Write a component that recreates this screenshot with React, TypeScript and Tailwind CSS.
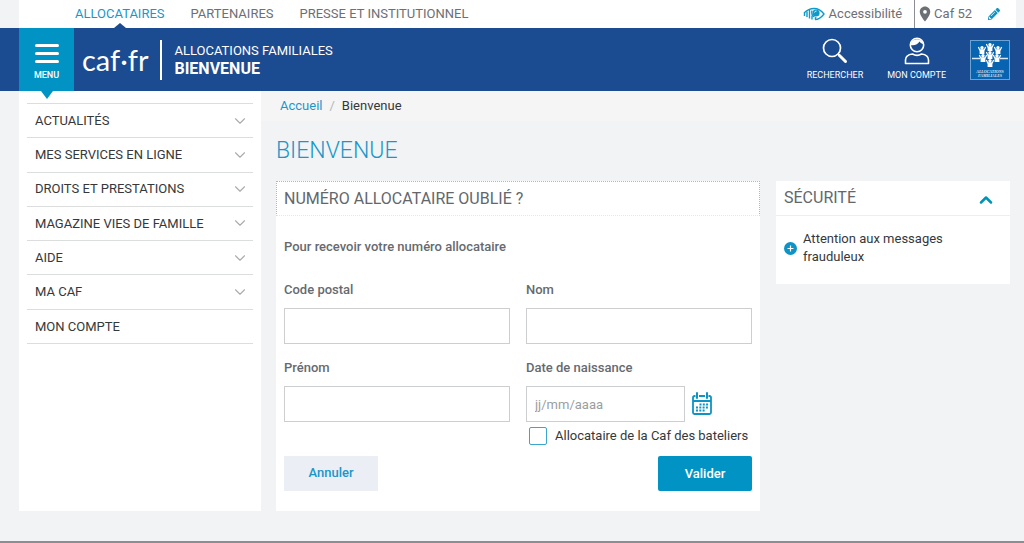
import { ChevronDown, ChevronUp } from 'lucide-react'
import { FaPencilAlt } from 'react-icons/fa'
import { MdLocationOn } from 'react-icons/md'

const menuItems = [
  { label: 'ACTUALITÉS', expandable: true },
  { label: 'MES SERVICES EN LIGNE', expandable: true },
  { label: 'DROITS ET PRESTATIONS', expandable: true },
  { label: 'MAGAZINE VIES DE FAMILLE', expandable: true },
  { label: 'AIDE', expandable: true },
  { label: 'MA CAF', expandable: true },
  { label: 'MON COMPTE', expandable: false },
]

const EyeIcon = () => (
  <svg width="22" height="14" viewBox="0 0 22 14" fill="none" stroke="#0d9aca">
    <path d="M1 6C4 3 7.500 1.500 11 1.500S18 3 21 7C18 11 15 12.500 12 12.500" strokeWidth="1.300" />
    <path d="M1.500 6v3M4 4.500v5.500M6.500 3v8.500M9 8.500v4" strokeWidth="1.400" />
    <path d="M9 3.500C8 6 9 9 11.500 10M12 12.500l1-2.500" strokeWidth="1.300" />
    <circle cx="13" cy="6" r="3.600" fill="#0d9aca" stroke="none" />
    <path d="M11.500 5.500a2 2 0 0 1 2-1.500" stroke="white" strokeWidth="0.900" />
  </svg>
)

const SearchIcon = () => (
  <svg width="26" height="26" viewBox="0 0 26 26" fill="none" stroke="white">
    <circle cx="10" cy="10" r="8.500" strokeWidth="1.700" />
    <path d="M16 16l2 2" strokeWidth="1.700" />
    <path d="M17.500 17.500l6 6" strokeWidth="3" strokeLinecap="round" />
  </svg>
)

const AccountIcon = () => (
  <svg width="26" height="28" viewBox="0 0 26 28" fill="none" stroke="white" strokeWidth="1.600">
    <circle cx="13" cy="8" r="6.700" />
    <path d="M6.500 8C10 9 14 7.500 15.500 4.500 16.500 6 18 7 19.500 7A6.700 6.700 0 0 0 6.500 8Z" fill="white" stroke="none" />
    <path d="M8.500 17c3 1.800 6 1.800 9 0 4.500.5 7 2.500 7 6v3.500h-23V23c0-3.500 2.500-5.500 7-6Z" strokeLinejoin="round" />
  </svg>
)

const people = [
  [20, 6],
  [12, 9],
  [28, 9],
  [20, 14],
  [13, 17],
  [27, 17],
  [20, 22],
]

const AfLogo = () => (
  <svg width="40" height="40" viewBox="0 0 40 40">
    <rect x="0.500" y="0.500" width="39" height="39" fill="#0864b1" stroke="#6da3d3" />
    <path d="M2 18.500h8M30 18.500h8" stroke="#d9e8f5" strokeWidth="1.300" />
    {people.map(([x, y]) => (
      <g key={`${x}-${y}`} transform={`translate(${x} ${y})`} fill="white">
        <circle cy="-1.300" r="1.700" />
        <path d="M-4.200-1.800l1.200-.5 1 2.500h4l1-2.500 1.200.5L2.400 2v3h-4.800V2Z" />
      </g>
    ))}
    <g fill="#d9e8f5" fontFamily="Liberation Serif, serif" fontSize="4" fontStyle="italic" fontWeight="700" textAnchor="middle">
      <text x="20" y="33">ALLOCATIONS</text>
      <text x="20" y="37">FAMILIALES</text>
    </g>
  </svg>
)

const CalendarIcon = () => (
  <svg width="20" height="24" viewBox="0 0 20 24" fill="none" stroke="#0d93c4">
    <path d="M3.500 4H2.500A1.500 1.500 0 0 0 1 5.500v15A1.500 1.500 0 0 0 2.500 22h15a1.500 1.500 0 0 0 1.500-1.500v-15A1.500 1.500 0 0 0 17.500 4h-1M7 4h6M1 9h18" strokeWidth="1.800" />
    <path d="M5 1v5M15 1v5" strokeWidth="2" strokeLinecap="round" />
    <path d="M7.500 12.500h9M4 15.500h12.500M4 18.500h9" strokeWidth="1.800" strokeDasharray="2 1.300" />
  </svg>
)

const TopBar = () => (
  <div className="mr-2 ml-[19px] flex h-7 items-center justify-between bg-white pl-14 text-[13px] text-[#6c7075]">
    <nav className="flex h-full items-center gap-[26px]">
      <a href="#" className="relative flex h-full items-center text-[#1a97c9]">
        ALLOCATAIRES
        <span className="absolute bottom-0 left-1/2 -ml-1.5 size-0 border-x-[6px] border-b-[5px] border-x-transparent border-b-[#1b4b91]" />
      </a>
      <a href="#">PARTENAIRES</a>
      <a href="#">PRESSE ET INSTITUTIONNEL</a>
    </nav>
    <div className="flex h-full items-center pr-4">
      <a href="#" className="flex items-center gap-1 pr-3">
        <EyeIcon />
        Accessibilité
      </a>
      <div className="flex h-full items-center border-l border-[#8b8f94] pl-px">
        <MdLocationOn className="size-[18px]" />
        <span>Caf 52</span>
        <button type="button" aria-label="Modifier ma Caf" className="ml-4">
          <FaPencilAlt className="size-3 text-[#0d93c4]" />
        </button>
      </div>
    </div>
  </div>
)

const Header = () => (
  <header className="flex h-[63px] bg-[#1b4b91] pr-3.5 pl-[19px] text-white">
    <button type="button" className="relative flex w-[55px] flex-col items-center bg-[#0093c4] pt-4 text-[9px] font-medium">
      <span className="flex w-6 flex-col gap-[5px]">
        <span className="h-[3px] rounded-sm bg-white" />
        <span className="h-[3px] rounded-sm bg-white" />
        <span className="h-[3px] rounded-sm bg-white" />
      </span>
      <span className="mt-1.5">MENU</span>
      <span className="absolute top-full left-1/2 -ml-1.5 size-0 border-x-[6px] border-t-[8px] border-x-transparent border-t-[#0093c4]" />
    </button>
    <a href="#" className="flex items-center pl-2 font-[Lato,sans-serif] text-[29px] leading-8">
      caf·fr
    </a>
    <div className="my-auto ml-3 flex h-10 flex-col justify-center border-l-2 border-white pl-3">
      <p className="text-[13px] leading-[18px]">ALLOCATIONS FAMILIALES</p>
      <p className="text-base leading-[18px] font-bold">BIENVENUE</p>
    </div>
    <div className="ml-auto flex items-center">
      <button type="button" className="flex flex-col items-center text-[9px]">
        <span className="flex h-7 items-center">
          <SearchIcon />
        </span>
        <span className="mt-1">RECHERCHER</span>
      </button>
      <button type="button" className="ml-6 flex flex-col items-center text-[9px]">
        <AccountIcon />
        <span className="mt-1">MON COMPTE</span>
      </button>
      <a href="#" aria-label="Allocations familiales" className="ml-6">
        <AfLogo />
      </a>
    </div>
  </header>
)

const Sidebar = () => (
  <nav className="w-[242px] shrink-0 bg-white px-2 pt-3">
    <ul className="grid h-[241px] auto-rows-fr border-t border-[#dcdede]">
      {menuItems.map((item) => (
        <li key={item.label} className="border-b border-[#dcdede]">
          <a href="#" className="flex h-full items-center justify-between pr-1 pl-2 text-[13px] text-[#35383b]">
            {item.label}
            {item.expandable && <ChevronDown className="size-[18px] text-[#a9acaf]" strokeWidth={1.500} />}
          </a>
        </li>
      ))}
    </ul>
  </nav>
)

const TextField = ({ id, label }: { id: string; label: string }) => (
  <div>
    <label htmlFor={id} className="block leading-5 font-medium">
      {label}
    </label>
    <input id={id} type="text" className="mt-2 block h-9 w-full border border-[#ccced0] bg-white px-2" />
  </div>
)

const NumberForm = () => (
  <section className="min-w-0 flex-1 bg-white pb-5">
    <h2 className="h-[35px] border border-dotted border-[#b4b7ba] border-b-[#e4e6e8] px-[7px] text-base leading-[34px] text-[#63676c]">
      NUMÉRO ALLOCATAIRE OUBLIÉ ?
    </h2>
    <form className="px-2 pt-[21px] text-[13px] text-[#666a6f]">
      <p className="leading-5 font-medium">Pour recevoir votre numéro allocataire</p>
      <div className="mt-[23px] grid grid-cols-2 gap-x-4 gap-y-3.5">
        <TextField id="code-postal" label="Code postal" />
        <TextField id="nom" label="Nom" />
        <TextField id="prenom" label="Prénom" />
        <div>
          <label htmlFor="naissance" className="block leading-5 font-medium">
            Date de naissance
          </label>
          <div className="mt-2 flex items-center gap-[7px]">
            <input
              id="naissance"
              type="text"
              placeholder="jj/mm/aaaa"
              className="h-9 w-[159px] border border-[#ccced0] bg-white px-2 placeholder:text-[#9b9ea1]"
            />
            <button type="button" aria-label="Choisir une date">
              <CalendarIcon />
            </button>
          </div>
          <div className="mt-[5px] flex items-center gap-2 pl-[3px] text-[#35383b]">
            <input
              id="bateliers"
              type="checkbox"
              className="size-[18px] appearance-none rounded-xs border border-[#3aa5cd] bg-white checked:bg-[#0093c4]"
            />
            <label htmlFor="bateliers" className="leading-[18px]">
              Allocataire de la Caf des bateliers
            </label>
          </div>
        </div>
      </div>
      <div className="mt-[11px] flex justify-between font-medium">
        <button type="button" className="h-[35px] w-[94px] bg-[#ebeef5] pb-0.5 text-[#1a97c9]">
          Annuler
        </button>
        <button type="submit" className="h-[35px] w-[94px] rounded-xs bg-[#0093c4] text-white">
          Valider
        </button>
      </div>
    </form>
  </section>
)

const Security = () => (
  <aside className="w-[234px] shrink-0 bg-white pb-[18px]">
    <div className="flex h-[35px] items-center justify-between border-b border-[#eceef0] pr-3.5 pl-2">
      <h2 className="text-base text-[#63676c]">SÉCURITÉ</h2>
      <button type="button" aria-label="Replier">
        <ChevronUp className="mt-1 size-5 text-[#0093b8]" strokeWidth={3} />
      </button>
    </div>
    <a href="#" className="flex items-center gap-1.5 pt-3.5 pr-14 pl-2 text-[13px] leading-[18px] text-[#35383b]">
      <svg width="13" height="13" viewBox="0 0 13 13" className="shrink-0">
        <circle cx="6.500" cy="6.500" r="6.500" fill="#0d93c4" />
        <path d="M6.500 3.500v6M3.500 6.500h6" stroke="white" strokeWidth="1.200" />
      </svg>
      Attention aux messages frauduleux
    </a>
  </aside>
)

const App = () => {
  return (
    <div className="flex min-h-screen flex-col border-b-2 border-[#8b8d90] bg-[#f1f3f5] font-[Roboto,sans-serif]">
      <TopBar />
      <Header />
      <div className="flex pl-[19px]">
        <Sidebar />
        <div className="min-w-0 flex-1">
          <nav className="flex h-[30px] items-center gap-[7px] bg-[#f5f5f5] pl-[19px] text-[13px] text-[#35383b]">
            <a href="#" className="text-[#1a97c9]">
              Accueil
            </a>
            <span className="text-[#b4b7ba]">/</span>
            <span>Bienvenue</span>
          </nav>
          <main className="pr-3.5 pl-[15px]">
            <h1 className="pt-3.5 pb-3.5 text-[23px] leading-8 font-light text-[#1a97c9]">BIENVENUE</h1>
            <div className="flex items-start gap-4">
              <NumberForm />
              <Security />
            </div>
          </main>
        </div>
      </div>
    </div>
  )
}

export default App
